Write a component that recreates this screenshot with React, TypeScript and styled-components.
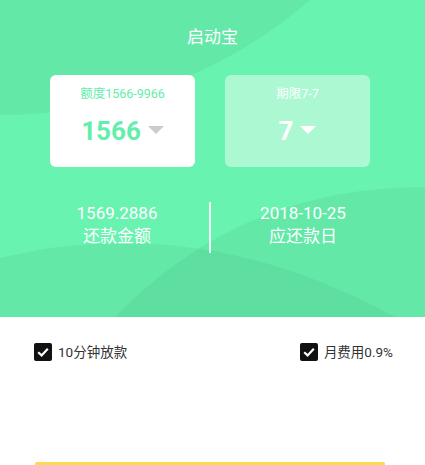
import React from "react";
import styled, { createGlobalStyle } from "styled-components";

const GlobalStyle = createGlobalStyle`
  html, body {
    margin: 0;
    padding: 0;
    background: #fff;
  }
  body {
    font-family: Roboto, "Noto Sans CJK SC", sans-serif;
  }
`;

const Page = styled.div`
  width: 425px;
  min-height: 465px;
  background: #fff;
`;

const Header = styled.header`
  position: relative;
  height: 317px;
  overflow: hidden;
  background: #68f3b0;
  padding-top: 25px;
  box-sizing: border-box;
`;

const Backdrop = styled.svg`
  position: absolute;
  inset: 0;
  width: 100%;
  height: 100%;
`;

const Content = styled.div`
  position: relative;
`;

const Title = styled.h1`
  margin: 0;
  font-size: 17px;
  line-height: 24px;
  font-weight: 400;
  color: #fff;
  text-align: center;
`;

const CardRow = styled.div`
  display: flex;
  gap: 30px;
  padding-left: 50px;
  margin-top: 26px;
`;

const Card = styled.div<{ $solid?: boolean }>`
  width: 145px;
  height: 92px;
  box-sizing: border-box;
  border-radius: 6px;
  padding-top: 11px;
  background: ${(p) => (p.$solid ? "#fff" : "rgba(255,255,255,0.45)")};
  color: ${(p) => (p.$solid ? "#63eeab" : "#fff")};
  display: flex;
  flex-direction: column;
  align-items: center;
`;

const CardLabel = styled.div`
  font-size: 12.5px;
  line-height: 16px;
`;

const CardValue = styled.div`
  margin-top: 14px;
  display: flex;
  align-items: center;
  font-size: 26px;
  line-height: 30px;
  font-weight: 700;
`;

const Caret = styled.span<{ $color: string }>`
  margin-left: 7px;
  width: 0;
  height: 0;
  border-left: 8px solid transparent;
  border-right: 8px solid transparent;
  border-top: 8px solid ${(p) => p.$color};
  margin-top: -2px;
`;

const Stats = styled.div`
  display: flex;
  align-items: flex-start;
  padding: 0 30px 0 25px;
  margin-top: 35px;
`;

const Stat = styled.div`
  flex: 1;
  text-align: center;
  color: #fff;
  font-size: 17px;
  line-height: 23px;
`;

const Divider = styled.div`
  width: 2px;
  height: 51px;
  background: rgba(255, 255, 255, 0.9);
`;

const Options = styled.div`
  display: flex;
  justify-content: space-between;
  padding: 26px 32px 0 34px;
`;

const Option = styled.label`
  display: flex;
  align-items: center;
  gap: 6px;
  font-size: 13.5px;
  line-height: 18px;
  color: #333;
`;

const Box = styled.span`
  width: 18px;
  height: 18px;
  border-radius: 2px;
  background: #111;
  display: flex;
  align-items: center;
  justify-content: center;
`;

const Submit = styled.div`
  margin: 101px 40px 0 35px;
  height: 44px;
  background: #fdd94e;
  border-radius: 2px;
`;

const Check = () => (
  <Box>
    <svg width="14" height="14" viewBox="0 0 14 14">
      <path d="M2.2 7.2 L5.6 10.4 L11.8 3.8" stroke="#fff" strokeWidth="2.2" fill="none" />
    </svg>
  </Box>
);

export default function App() {
  return (
    <Page>
      <GlobalStyle />
      <Header>
        <Backdrop viewBox="0 0 425 317" preserveAspectRatio="none">
          <path d="M0 0 H310 C230 70 120 115 0 115 Z" fill="#000" fillOpacity="0.045" />
          <path d="M0 258 C90 236 230 226 395 317 H0 Z" fill="#000" fillOpacity="0.045" />
          <path d="M115 317 C200 230 300 187 425 187 V317 Z" fill="#000" fillOpacity="0.045" />
        </Backdrop>
        <Content>
          <Title>启动宝</Title>
          <CardRow>
            <Card $solid>
              <CardLabel>额度1566-9966</CardLabel>
              <CardValue>
                1566
                <Caret $color="#cccccc" />
              </CardValue>
            </Card>
            <Card>
              <CardLabel>期限7-7</CardLabel>
              <CardValue>
                7
                <Caret $color="#ffffff" />
              </CardValue>
            </Card>
          </CardRow>
          <Stats>
            <Stat>
              1569.2886
              <br />
              还款金额
            </Stat>
            <Divider />
            <Stat>
              2018-10-25
              <br />
              应还款日
            </Stat>
          </Stats>
        </Content>
      </Header>
      <Options>
        <Option>
          <Check />
          10分钟放款
        </Option>
        <Option>
          <Check />
          月费用0.9%
        </Option>
      </Options>
      <Submit />
    </Page>
  );
}
